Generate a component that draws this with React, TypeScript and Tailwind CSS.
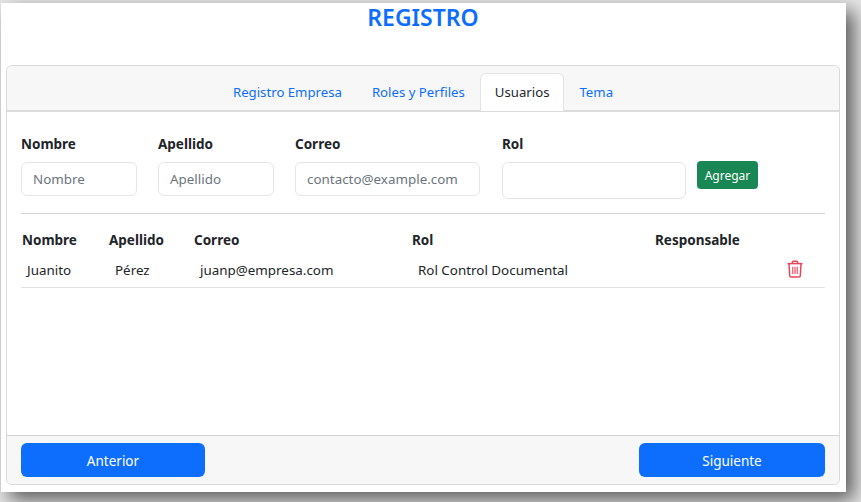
const font = { fontFamily: '"Noto Sans", "Open Sans", sans-serif' };

const tabs = ['Registro Empresa', 'Roles y Perfiles', 'Usuarios', 'Tema'];

const fields = [
  { label: 'Nombre', placeholder: 'Nombre', width: 'w-[116px]' },
  { label: 'Apellido', placeholder: 'Apellido', width: 'w-[116px]' },
  { label: 'Correo', placeholder: 'contacto@example.com', width: 'w-[185px]' },
];

const TrashIcon = () => (
  <svg width="18" height="18" viewBox="0 0 18 18" fill="none" stroke="#e4475a" strokeWidth="1.5">
    <path d="M1.5 3.6h15" />
    <path d="M6.4 3.4V2.1c0-.5.4-.9.9-.9h3.4c.5 0 .9.4.9.9v1.3" />
    <path d="M3 3.8l.7 11.9c0 .7.6 1.3 1.3 1.3h8c.7 0 1.3-.6 1.3-1.3L15 3.8" />
    <path d="M6.8 6.8v7.2M9 6.8v7.2M11.2 6.8v7.2" strokeWidth="1.1" />
  </svg>
);

export default function App() {
  return (
    <div className="h-[502px] w-[861px] overflow-hidden bg-[#e6e6e6] pl-px pt-[3px] text-[#212529]" style={font}>
      <div className="flex h-[489px] w-[845px] flex-col bg-white pl-[5px] pr-[6px] pb-[7px] shadow-[8px_8px_18px_rgba(0,0,0,0.6)]">
        <h1 className="h-[62px] text-center text-[23px] leading-[28px] font-semibold text-[#0d6efd]">REGISTRO</h1>

        <div className="flex min-h-0 flex-1 flex-col rounded-md border border-[#d9d9d9]">
          <div className="flex h-[46px] justify-center rounded-t-md border-b-2 border-[#dcdcdc] bg-[#f7f7f7]">
            {tabs.map(tab =>
              tab === 'Usuarios' ? (
                <span key={tab} className="mt-[7px] flex h-[38px] items-center rounded-t-md border border-b-0 border-[#e3e3e3] bg-white px-[14px] pt-px text-[13.2px]">
                  {tab}
                </span>
              ) : (
                <span key={tab} className="mt-[7px] flex h-[38px] items-center px-[15px] pt-px text-[13.2px] text-[#0d6efd]">
                  {tab}
                </span>
              ),
            )}
          </div>

          <div className="flex min-h-0 flex-1 flex-col px-[14px]">
            <div className="mt-[22px] flex items-start">
              {fields.map(field => (
                <label key={field.label} className="mr-[21px] block">
                  <span className="block h-[28px] text-[13.5px] leading-[20px] font-bold">{field.label}</span>
                  <input
                    placeholder={field.placeholder}
                    className={`${field.width} h-[34px] rounded-md border border-[#e4e6e9] px-[11px] text-[13.4px] outline-none placeholder:text-[#6c757d]`}
                    style={font}
                  />
                </label>
              ))}
              <label className="ml-px block">
                <span className="block h-[28px] text-[13.5px] leading-[20px] font-bold">Rol</span>
                <div className="h-[37px] w-[184px] rounded-md border border-[#e4e6e9]" />
              </label>
              <button className="mt-[27px] ml-[11px] h-[28px] w-[61px] rounded-[4px] bg-[#198754] pt-px text-[12px] text-white">Agregar</button>
            </div>

            <div className="mt-[14px] border-t border-[#d2d2d2]" />

            <table className="mt-[16px] w-[804px] table-fixed border-collapse text-left text-[13.4px]">
              <thead>
                <tr className="h-[20px] text-[13.5px]">
                  <th className="w-[87px] pl-px font-bold">Nombre</th>
                  <th className="w-[85px] pl-px font-bold">Apellido</th>
                  <th className="w-[218px] pl-px font-bold">Correo</th>
                  <th className="w-[243px] pl-px font-bold">Rol</th>
                  <th className="w-[125px] pl-px font-bold">Responsable</th>
                  <th />
                </tr>
              </thead>
              <tbody>
                <tr className="h-[37px] border-b border-[#e2e2e2]">
                  <td className="pl-[6px] pt-[3px]">Juanito</td>
                  <td className="pl-[7px] pt-[3px]">Pérez</td>
                  <td className="pl-[7px] pt-[3px]">juanp@empresa.com</td>
                  <td className="pl-[7px] pt-[3px]">Rol Control Documental</td>
                  <td />
                  <td className="pl-[7px] pt-px">
                    <TrashIcon />
                  </td>
                </tr>
              </tbody>
            </table>
          </div>

          <div className="flex h-[49px] items-center justify-between rounded-b-md border-t border-[#d2d2d2] bg-[#f7f7f7] px-[14px]">
            <button className="h-[34px] w-[184px] rounded-md bg-[#0d6efd] pt-[2px] text-[13.5px] text-white">Anterior</button>
            <button className="h-[34px] w-[186px] rounded-md bg-[#0d6efd] pt-[2px] text-[13.5px] text-white">Siguiente</button>
          </div>
        </div>
      </div>
    </div>
  );
}
